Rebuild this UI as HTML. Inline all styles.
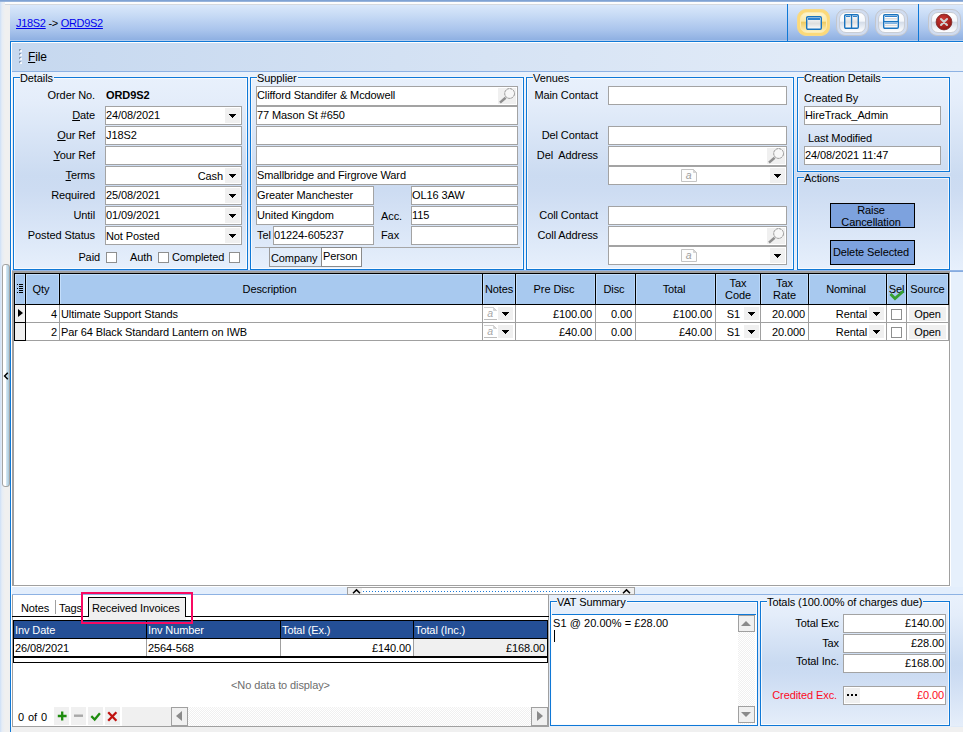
<!DOCTYPE html>
<html>
<head>
<meta charset="utf-8">
<title>ORD9S2</title>
<style>
*{box-sizing:border-box;margin:0;padding:0}
html,body{width:963px;height:732px;overflow:hidden;background:#f0f0f0}
body{font-family:"Liberation Sans","DejaVu Sans",sans-serif;font-size:11px;color:#000;position:relative;letter-spacing:-0.1px}
.a{position:absolute}
.t{position:absolute;white-space:nowrap;line-height:13px;height:13px}
.r{text-align:right}
.c{text-align:center}
u{text-decoration:underline}
/* top */
#topline{left:0;top:0;width:963px;height:5px;background:linear-gradient(#7fa2d3 0 1px,#98b4dc 1px 2px,#fdfdfd 2px 4px,#d4d8de 4px 5px)}
#leftstrip{left:0;top:2px;width:5px;height:730px;background:linear-gradient(90deg,#cddff6,#e6edf6 40%,#f0f0f0)}
#hdr{left:10px;top:5px;width:953px;height:36px;background:linear-gradient(#dae8fb 0%,#c6daf5 30%,#a9c4ec 70%,#8fb0e2 97%,#b4ccee 98%)}
#panel{left:10px;top:41px;width:953px;height:691px;background:#dfeaf8;border-left:1px solid #0f78d6;border-top:1px solid #0f78d6;box-shadow:inset 1px 1px 0 #fff}
#menubar{left:12px;top:43px;width:951px;height:28px;background:linear-gradient(90deg,#c6d8ef,#e6eef9)}
#content{left:12px;top:72px;width:951px;height:524px;background:#e6f0fc}
#toppanel{left:12px;top:72px;width:951px;height:199px;background:linear-gradient(#e9f1fc 0%,#e4edfa 15%,#cbdbf1 52%,#cddcf2 60%,#e7f0fc 100%)}
/* fieldsets */
.fs{position:absolute;border:1px solid #0f78d6;box-shadow:inset 0 0 0 1px rgba(255,255,255,.75),0 0 0 1px rgba(255,255,255,.25)}
.lg{position:absolute;top:-5px;left:6px;height:10px;line-height:10px;padding:0 1px 0 0;background:#e7f0fb;white-space:nowrap}
.in{position:absolute;height:19px;background:#fff;border:1px solid #a3a3a3;line-height:16px;padding-left:0;white-space:nowrap;overflow:hidden}
.dd{position:absolute;right:1px;top:1px;width:15px;height:15px;background:#f0f0f0}
.dd:after{content:"";position:absolute;left:4px;top:6px;width:7px;height:4px;background:linear-gradient(#000,#000) 0 0/7px 1px no-repeat,linear-gradient(#000,#000) 1px 1px/5px 1px no-repeat,linear-gradient(#000,#000) 2px 2px/3px 1px no-repeat,linear-gradient(#000,#000) 3px 3px/1px 1px no-repeat}
.cb{position:absolute;width:11px;height:11px;background:#fff;border:1px solid #8e8f8f}
.btn{position:absolute;background:#7da2de;border:1px solid #000;text-align:center;line-height:12px;padding-right:3px}

.mag{position:absolute;right:1px;top:1px;width:18px;height:16px;background:#f0f0f0}
.memo{position:absolute}

.gh{background:#a8c9ef;box-shadow:inset 1px 1px 0 #c4defb,inset -1px 0 0 #b9d6f8;text-align:center;white-space:nowrap}
.gdd{width:15px;height:13px;background:#f0f0f0}
.gdd:after{content:"";position:absolute;left:4px;top:5px;width:7px;height:4px;background:linear-gradient(#000,#000) 0 0/7px 1px no-repeat,linear-gradient(#000,#000) 1px 1px/5px 1px no-repeat,linear-gradient(#000,#000) 2px 2px/3px 1px no-repeat,linear-gradient(#000,#000) 3px 3px/1px 1px no-repeat}
.memo2{width:11px;height:12px;border:1px solid #c8c8c8;border-top-color:#ddd;background:#fff;font-family:"Liberation Serif",serif;font-style:italic;font-size:11px;line-height:9px;color:#b4b4b4;text-align:center;letter-spacing:0}
</style>
</head>
<body>
<div class="a" id="topline"></div>
<div class="a" id="leftstrip"></div>
<div class="a" id="hdr"></div>
<div class="a" id="panel"></div>
<div class="a" id="menubar"></div>
<div class="a" style="left:11px;top:727px;width:952px;height:5px;background:#f0f0f0"></div>
<div class="a" id="content"></div>
<div class="a" id="toppanel"></div>
<div class="a" style="left:12px;top:71px;width:951px;height:1px;background:#8db2e3"></div>

<!-- header text -->
<div class="t" style="left:16px;top:17px;color:#000;letter-spacing:-0.3px"><span style="color:#0000ee;text-decoration:underline">J18S2</span> -&gt; <span style="color:#0000ee;text-decoration:underline">ORD9S2</span></div>

<!-- menu -->
<div class="t" style="left:28px;top:51px;font-size:12px"><u>F</u>ile</div>

<!-- Details -->
<div class="fs" style="left:13px;top:77px;width:235px;height:193px"><span class="lg">Details</span></div>
<div class="t r" style="left:20px;width:75px;top:89px">Order No.</div>
<div class="t" style="left:106px;top:89px;font-weight:bold">ORD9S2</div>
<div class="t r" style="left:20px;width:75px;top:109px"><u>D</u>ate</div>
<div class="in" style="left:105px;top:106px;width:137px">24/08/2021<span class="dd"></span></div>
<div class="t r" style="left:20px;width:75px;top:129px"><u>O</u>ur Ref</div>
<div class="in" style="left:105px;top:126px;width:137px">J18S2</div>
<div class="t r" style="left:20px;width:75px;top:149px"><u>Y</u>our Ref</div>
<div class="in" style="left:105px;top:146px;width:137px"></div>
<div class="t r" style="left:20px;width:75px;top:169px"><u>T</u>erms</div>
<div class="in r" style="left:105px;top:166px;width:137px;padding-right:18px;line-height:18px">Cash<span class="dd"></span></div>
<div class="t r" style="left:20px;width:75px;top:189px">Required</div>
<div class="in" style="left:105px;top:186px;width:137px">25/08/2021<span class="dd"></span></div>
<div class="t r" style="left:20px;width:75px;top:209px">Until</div>
<div class="in" style="left:105px;top:206px;width:137px">01/09/2021<span class="dd"></span></div>
<div class="t r" style="left:20px;width:75px;top:229px">Posted Status</div>
<div class="in" style="left:105px;top:226px;width:137px;height:19px;line-height:18px">Not Posted<span class="dd"></span></div>
<div class="t r" style="left:20px;width:80px;top:251px">Paid</div>
<div class="cb" style="left:106px;top:252px"></div>
<div class="t" style="left:130px;top:251px">Auth</div>
<div class="cb" style="left:158px;top:252px"></div>
<div class="t" style="left:172px;top:251px">Completed</div>
<div class="cb" style="left:229px;top:252px"></div>

<!-- Supplier -->
<div class="fs" style="left:250px;top:77px;width:274px;height:193px"><span class="lg">Supplier</span></div>
<div class="in" style="left:256px;top:86px;width:262px;height:20px">Clifford Standifer &amp; Mcdowell<svg class="mag" viewBox="0 0 18 16"><circle cx="11.6" cy="5.5" r="4.9" fill="#f7f7f7" stroke="#8f8f8f" stroke-width="1" stroke-dasharray="2.6 0.6"/><path d="M2 14.6L7.6 9.7" stroke="#8e8e8e" stroke-width="2.5"/></svg></div>
<div class="in" style="left:256px;top:106px;width:262px">77 Mason St #650</div>
<div class="in" style="left:256px;top:126px;width:262px"></div>
<div class="in" style="left:256px;top:146px;width:262px"></div>
<div class="in" style="left:256px;top:166px;width:262px">Smallbridge and Firgrove Ward</div>
<div class="in" style="left:256px;top:186px;width:118px">Greater Manchester</div>
<div class="in" style="left:411px;top:186px;width:107px">OL16 3AW</div>
<div class="in" style="left:256px;top:206px;width:118px">United Kingdom</div>
<div class="t" style="left:381px;top:210px">Acc.</div>
<div class="in" style="left:411px;top:206px;width:107px">115</div>
<div class="t" style="left:257px;top:229px">Tel</div>
<div class="in" style="left:273px;top:226px;width:101px">01224-605237</div>
<div class="t" style="left:381px;top:229px">Fax</div>
<div class="in" style="left:411px;top:226px;width:107px"></div>
<div class="a" style="left:255px;top:247px;width:265px;height:1px;background:#a6a6a6"></div>
<div class="a" style="left:269px;top:247px;width:53px;height:20px;border:1px solid #9a9a9a;border-right:0;background:#e2ecf9"></div>
<div class="t" style="left:271px;top:252px">Company</div>
<div class="a" style="left:321px;top:247px;width:41px;height:20px;border:1px solid #8a8a8a;background:#fff"></div>
<div class="t" style="left:323px;top:250px">Person</div>

<!-- Venues -->
<div class="fs" style="left:526px;top:77px;width:268px;height:193px"><span class="lg">Venues</span></div>
<div class="t r" style="left:528px;width:70px;top:89px">Main Contact</div>
<div class="in" style="left:608px;top:86px;width:179px"></div>
<div class="t r" style="left:528px;width:70px;top:129px">Del Contact</div>
<div class="in" style="left:608px;top:126px;width:179px"></div>
<div class="t r" style="left:528px;width:70px;top:149px">Del&nbsp; Address</div>
<div class="in" style="left:608px;top:146px;width:179px;height:20px"><svg class="mag" viewBox="0 0 18 16"><circle cx="11.6" cy="5.5" r="4.9" fill="#f7f7f7" stroke="#8f8f8f" stroke-width="1" stroke-dasharray="2.6 0.6"/><path d="M2 14.6L7.6 9.7" stroke="#8e8e8e" stroke-width="2.5"/></svg></div>
<div class="in" style="left:608px;top:166px;width:179px"><svg class="memo" style="left:72px;top:2px" width="16" height="13" viewBox="0 0 16 13"><path d="M.5 .5H12.5L15.5 3.5V12.5H.5Z" fill="#fdfdfd" stroke="#c4c4c4"/><path d="M12.5 .5V3.5H15.5Z" fill="#d6d6d6" stroke="#c4c4c4" stroke-width=".6"/><text x="7.7" y="10" text-anchor="middle" font-family="Liberation Sans, sans-serif" font-style="italic" font-size="10.5" fill="#9c9c9c">a</text></svg><span class="dd"></span></div>
<div class="t r" style="left:528px;width:70px;top:209px">Coll Contact</div>
<div class="in" style="left:608px;top:206px;width:179px"></div>
<div class="t r" style="left:528px;width:70px;top:229px">Coll Address</div>
<div class="in" style="left:608px;top:226px;width:179px;height:20px"><svg class="mag" viewBox="0 0 18 16"><circle cx="11.6" cy="5.5" r="4.9" fill="#f7f7f7" stroke="#8f8f8f" stroke-width="1" stroke-dasharray="2.6 0.6"/><path d="M2 14.6L7.6 9.7" stroke="#8e8e8e" stroke-width="2.5"/></svg></div>
<div class="in" style="left:608px;top:246px;width:179px"><svg class="memo" style="left:72px;top:2px" width="16" height="13" viewBox="0 0 16 13"><path d="M.5 .5H12.5L15.5 3.5V12.5H.5Z" fill="#fdfdfd" stroke="#c4c4c4"/><path d="M12.5 .5V3.5H15.5Z" fill="#d6d6d6" stroke="#c4c4c4" stroke-width=".6"/><text x="7.7" y="10" text-anchor="middle" font-family="Liberation Sans, sans-serif" font-style="italic" font-size="10.5" fill="#9c9c9c">a</text></svg><span class="dd"></span></div>

<!-- Creation Details -->
<div class="fs" style="left:797px;top:77px;width:153px;height:95px"><span class="lg">Creation Details</span></div>
<div class="t" style="left:804px;top:92px">Created By</div>
<div class="in" style="left:804px;top:106px;width:137px">HireTrack_Admin</div>
<div class="t" style="left:808px;top:132px">Last Modified</div>
<div class="in" style="left:804px;top:146px;width:137px">24/08/2021 11:47</div>

<!-- Actions -->
<div class="fs" style="left:797px;top:177px;width:153px;height:93px"><span class="lg" style="background:#cbdbf1">Actions</span></div>
<div class="btn" style="left:830px;top:203px;width:85px;height:25px;padding-top:0px">Raise<br>Cancellation</div>
<div class="btn" style="left:830px;top:240px;width:85px;height:25px;line-height:22px">Delete Selected</div>

<div class="a" style="left:12px;top:270px;width:951px;height:1px;background:#94b6e5"></div><div class="a" style="left:950px;top:271px;width:13px;height:1px;background:#86abdf"></div><div class="a" style="left:950px;top:272px;width:1px;height:314px;background:#fff"></div>
<!-- Grid -->
<div class="a" style="left:12px;top:271px;width:938px;height:315px;border:1px solid #a0a0a0;background:#fff"></div>
<div class="a" style="left:13px;top:272px;width:936px;height:1px;background:#a0a0a0"></div><div class="a" style="left:13px;top:272px;width:1px;height:313px;background:#a0a0a0"></div>
<div class="a" style="left:14px;top:273px;width:935px;height:32px;background:#000"></div>
<div class="a gh" style="left:15px;top:274px;width:10px;height:30px;line-height:30px"></div>
<div class="a gh" style="left:26px;top:274px;width:33px;height:30px;line-height:30px;padding-right:3px">Qty</div>
<div class="a gh" style="left:60px;top:274px;width:422px;height:30px;line-height:30px;padding-right:3px">Description</div>
<div class="a gh" style="left:483px;top:274px;width:32px;height:30px;line-height:30px">Notes</div>
<div class="a gh" style="left:516px;top:274px;width:79px;height:30px;line-height:30px;padding-right:3px">Pre Disc</div>
<div class="a gh" style="left:596px;top:274px;width:39px;height:30px;line-height:30px;padding-right:3px">Disc</div>
<div class="a gh" style="left:636px;top:274px;width:79px;height:30px;line-height:30px;padding-right:3px">Total</div>
<div class="a gh" style="left:716px;top:274px;width:44px;height:30px;line-height:12px;padding-top:3px">Tax<br>Code</div>
<div class="a gh" style="left:761px;top:274px;width:47px;height:30px;line-height:12px;padding-top:3px">Tax<br>Rate</div>
<div class="a gh" style="left:809px;top:274px;width:77px;height:30px;line-height:30px;padding-right:3px">Nominal</div>
<div class="a gh" style="left:887px;top:274px;width:19px;height:30px;line-height:30px">Sel</div>
<div class="a gh" style="left:907px;top:274px;width:41px;height:30px;line-height:30px">Source</div>
<div class="a" style="left:14px;top:304px;width:12px;height:19px;background:#000"></div><div class="a" style="left:15px;top:305px;width:10px;height:17px;background:#f0f0f0"></div>
<div class="a" style="left:18px;top:309px;border:4.5px solid transparent;border-left:5.5px solid #000;border-right:0"></div>
<div class="a" style="left:26px;top:322px;width:923px;height:1px;background:#a0a0a0"></div>
<div class="a" style="left:59px;top:305px;width:1px;height:17px;background:#a0a0a0"></div>
<div class="a" style="left:482px;top:305px;width:1px;height:17px;background:#a0a0a0"></div>
<div class="a" style="left:515px;top:305px;width:1px;height:17px;background:#a0a0a0"></div>
<div class="a" style="left:595px;top:305px;width:1px;height:17px;background:#a0a0a0"></div>
<div class="a" style="left:635px;top:305px;width:1px;height:17px;background:#a0a0a0"></div>
<div class="a" style="left:715px;top:305px;width:1px;height:17px;background:#a0a0a0"></div>
<div class="a" style="left:760px;top:305px;width:1px;height:17px;background:#a0a0a0"></div>
<div class="a" style="left:808px;top:305px;width:1px;height:17px;background:#a0a0a0"></div>
<div class="a" style="left:886px;top:305px;width:1px;height:17px;background:#a0a0a0"></div>
<div class="a" style="left:906px;top:305px;width:1px;height:17px;background:#a0a0a0"></div>
<div class="a" style="left:948px;top:305px;width:1px;height:17px;background:#a0a0a0"></div>
<div class="t r" style="left:26px;width:33px;top:308px;padding-right:2px">4</div>
<div class="t " style="left:60px;width:422px;top:308px;padding-left:1px">Ultimate Support Stands</div>
<svg class="a" style="left:484px;top:307px" width="13" height="13" viewBox="0 0 13 13"><path d="M0 .5H9.5L12.5 3.5" fill="none" stroke="#cfcfcf"/><path d="M9.5 .5V3.5H12.5Z" fill="#d6d6d6" stroke="#c9c9c9" stroke-width=".6"/><path d="M0 12.5H13" stroke="#bdbdbd"/><text x="6" y="10" text-anchor="middle" font-family="Liberation Sans, sans-serif" font-style="italic" font-size="10.5" fill="#a6a6a6">a</text></svg><div class="a gdd" style="left:498px;top:307px"></div>
<div class="t r" style="left:516px;width:79px;top:308px;padding-right:3px">£100.00</div>
<div class="t r" style="left:596px;width:39px;top:308px;padding-right:3px">0.00</div>
<div class="t r" style="left:636px;width:79px;top:308px;padding-right:3px">£100.00</div>
<div class="t r" style="left:716px;width:44px;top:308px;padding-right:20px">S1</div>
<div class="a gdd" style="left:744px;top:307px"></div>
<div class="t r" style="left:761px;width:47px;top:308px;padding-right:3px">20.000</div>
<div class="t r" style="left:809px;width:77px;top:308px;padding-right:19px">Rental</div>
<div class="a gdd" style="left:869px;top:307px"></div>
<div class="cb" style="left:891px;top:309px"></div>
<div class="a" style="left:909px;top:307px;width:37px;height:14px;background:#f0f0f0"></div>
<div class="t c" style="left:907px;width:41px;top:308px;">Open</div>
<div class="a" style="left:14px;top:322px;width:12px;height:19px;background:#000"></div><div class="a" style="left:15px;top:323px;width:10px;height:17px;background:#f0f0f0"></div>
<div class="a" style="left:26px;top:340px;width:923px;height:1px;background:#a0a0a0"></div>
<div class="a" style="left:59px;top:323px;width:1px;height:17px;background:#a0a0a0"></div>
<div class="a" style="left:482px;top:323px;width:1px;height:17px;background:#a0a0a0"></div>
<div class="a" style="left:515px;top:323px;width:1px;height:17px;background:#a0a0a0"></div>
<div class="a" style="left:595px;top:323px;width:1px;height:17px;background:#a0a0a0"></div>
<div class="a" style="left:635px;top:323px;width:1px;height:17px;background:#a0a0a0"></div>
<div class="a" style="left:715px;top:323px;width:1px;height:17px;background:#a0a0a0"></div>
<div class="a" style="left:760px;top:323px;width:1px;height:17px;background:#a0a0a0"></div>
<div class="a" style="left:808px;top:323px;width:1px;height:17px;background:#a0a0a0"></div>
<div class="a" style="left:886px;top:323px;width:1px;height:17px;background:#a0a0a0"></div>
<div class="a" style="left:906px;top:323px;width:1px;height:17px;background:#a0a0a0"></div>
<div class="a" style="left:948px;top:323px;width:1px;height:17px;background:#a0a0a0"></div>
<div class="t r" style="left:26px;width:33px;top:326px;padding-right:2px">2</div>
<div class="t " style="left:60px;width:422px;top:326px;padding-left:1px">Par 64 Black Standard Lantern on IWB</div>
<svg class="a" style="left:484px;top:325px" width="13" height="13" viewBox="0 0 13 13"><path d="M0 .5H9.5L12.5 3.5" fill="none" stroke="#cfcfcf"/><path d="M9.5 .5V3.5H12.5Z" fill="#d6d6d6" stroke="#c9c9c9" stroke-width=".6"/><path d="M0 12.5H13" stroke="#bdbdbd"/><text x="6" y="10" text-anchor="middle" font-family="Liberation Sans, sans-serif" font-style="italic" font-size="10.5" fill="#a6a6a6">a</text></svg><div class="a gdd" style="left:498px;top:325px"></div>
<div class="t r" style="left:516px;width:79px;top:326px;padding-right:3px">£40.00</div>
<div class="t r" style="left:596px;width:39px;top:326px;padding-right:3px">0.00</div>
<div class="t r" style="left:636px;width:79px;top:326px;padding-right:3px">£40.00</div>
<div class="t r" style="left:716px;width:44px;top:326px;padding-right:20px">S1</div>
<div class="a gdd" style="left:744px;top:325px"></div>
<div class="t r" style="left:761px;width:47px;top:326px;padding-right:3px">20.000</div>
<div class="t r" style="left:809px;width:77px;top:326px;padding-right:19px">Rental</div>
<div class="a gdd" style="left:869px;top:325px"></div>
<div class="cb" style="left:891px;top:327px"></div>
<div class="a" style="left:909px;top:325px;width:37px;height:14px;background:#f0f0f0"></div>
<div class="t c" style="left:907px;width:41px;top:326px;">Open</div>
<svg class="a" style="left:889px;top:289px" width="16" height="12" viewBox="0 0 16 12"><path d="M1.5 5 L6 9.5 L14.5 2" fill="none" stroke="#35a030" stroke-width="2.8"/></svg>
<div class="a" style="left:19px;top:284px;width:4px;height:9px;background:repeating-linear-gradient(#000 0 1px,transparent 1px 2px)"></div><div class="a" style="left:17px;top:284px;width:1px;height:9px;background:repeating-linear-gradient(#000 0 1px,transparent 1px 4px)"></div>
<div class="a" style="left:12px;top:586px;width:938px;height:1px;background:#fff"></div>
<div class="a" style="left:12px;top:587px;width:951px;height:8px;background:#e3eefc;border-bottom:1px solid #8db2e3"></div>
<div class="a" style="left:347px;top:587px;width:288px;height:8px;background:#fff;border:1px solid #a0a0a0"></div>
<div class="a" style="left:348px;top:588px;width:14px;height:6px;background:#f0f0f0"></div><div class="a" style="left:620px;top:588px;width:14px;height:6px;background:#f0f0f0"></div>
<div class="a" style="left:363px;top:591px;width:256px;height:1px;background:repeating-linear-gradient(90deg,#1a7ad8 0 1px,transparent 1px 3px)"></div>
<svg class="a" style="left:352px;top:588px" width="9" height="6" viewBox="0 0 9 6"><path d="M1 5.2 L4.5 1.9 L8 5.2" fill="none" stroke="#000" stroke-width="1.5"/></svg>
<svg class="a" style="left:622px;top:588px" width="9" height="6" viewBox="0 0 9 6"><path d="M1 5.2 L4.5 1.9 L8 5.2" fill="none" stroke="#000" stroke-width="1.5"/></svg>
<!-- Bottom left -->
<div class="a" style="left:12px;top:595px;width:537px;height:132px;background:#fff;border:1px solid #a0a0a0;border-top:0"></div>
<div class="a" style="left:12px;top:616px;width:537px;height:1px;background:#000"></div>
<div class="a" style="left:88px;top:597px;width:98px;height:23px;background:#f0f0f0;border:1px solid #000;border-bottom:0"></div><div class="a" style="left:88px;top:617px;width:98px;height:3px;background:#f0f0f0"></div>
<div class="t" style="left:21px;top:602px">Notes</div><div class="a" style="left:55px;top:600px;width:1px;height:14px;background:#a0a0a0"></div><div class="t" style="left:59px;top:602px">Tags</div><div class="t" style="left:92px;top:602px">Received Invoices</div>
<div class="a" style="left:81px;top:592px;width:112px;height:32px;border:2px solid #f80a62;z-index:5"></div>
<div class="a" style="left:13px;top:620px;width:535px;height:19px;background:#000"></div>
<div class="a" style="left:14px;top:621px;width:132px;height:17px;background:#244f96;color:#fff;line-height:18px;padding-left:1px;white-space:nowrap">Inv Date</div>
<div class="a" style="left:147px;top:621px;width:133px;height:17px;background:#244f96;color:#fff;line-height:18px;padding-left:1px;white-space:nowrap">Inv Number</div>
<div class="a" style="left:281px;top:621px;width:132px;height:17px;background:#244f96;color:#fff;line-height:18px;padding-left:1px;white-space:nowrap">Total (Ex.)</div>
<div class="a" style="left:414px;top:621px;width:133px;height:17px;background:#244f96;color:#fff;line-height:18px;padding-left:1px;white-space:nowrap">Total (Inc.)</div>
<div class="a" style="left:13px;top:639px;width:535px;height:24px;background:#000"></div>
<div class="a " style="left:14px;top:639px;width:132px;height:17px;background:#fff;line-height:18px;padding:0 2px 0 1px;white-space:nowrap">26/08/2021</div>
<div class="a " style="left:147px;top:639px;width:133px;height:17px;background:#fff;line-height:18px;padding:0 2px 0 1px;white-space:nowrap">2564-568</div>
<div class="a r" style="left:281px;top:639px;width:132px;height:17px;background:#fff;line-height:18px;padding:0 2px 0 1px;white-space:nowrap">£140.00</div>
<div class="a r" style="left:414px;top:639px;width:133px;height:17px;background:#f0f0f0;line-height:18px;padding:0 2px 0 1px;white-space:nowrap">£168.00</div>
<div class="a" style="left:146px;top:639px;width:1px;height:17px;background:#a0a0a0"></div>
<div class="a" style="left:280px;top:639px;width:1px;height:17px;background:#a0a0a0"></div>
<div class="a" style="left:413px;top:639px;width:1px;height:17px;background:#a0a0a0"></div>
<div class="a" style="left:14px;top:658px;width:533px;height:4px;background:#fff"></div>
<div class="t c" style="left:13px;width:535px;top:679px;color:#6d6d6d">&lt;No data to display&gt;</div>
<div class="a" style="left:54px;top:707px;width:494px;height:19px;background:#f0f0f0"></div>
<div class="t" style="left:18px;top:711px;word-spacing:1px">0 of 0</div>
<div class="a" style="left:69px;top:707px;width:2px;height:19px;background:#fff"></div>
<div class="a" style="left:86px;top:707px;width:2px;height:19px;background:#fff"></div>
<div class="a" style="left:103px;top:707px;width:2px;height:19px;background:#fff"></div>
<div class="a" style="left:188px;top:707px;width:343px;height:19px;background:repeating-conic-gradient(#fff 0 25%,#f0f0f0 0 50%) 0 0/2px 2px"></div>
<div class="a" style="left:171px;top:707px;width:17px;height:19px;background:#f0f0f0;border:1px solid #a0a0a0"></div><div class="a" style="left:176px;top:711px;border:5.5px solid transparent;border-right:6.5px solid #8a8a8a;border-left:0"></div>
<div class="a" style="left:531px;top:707px;width:17px;height:19px;background:#f0f0f0;border:1px solid #a0a0a0"></div><div class="a" style="left:537px;top:711px;border:5.5px solid transparent;border-left:6.5px solid #8a8a8a;border-right:0"></div>
<div class="a" style="left:120px;top:707px;width:2px;height:19px;background:#fff"></div><div class="a" style="left:54px;top:725px;width:68px;height:1px;background:#fff"></div><svg class="a" style="left:54px;top:707px" width="70" height="19" viewBox="0 0 70 19"><path d="M3.8 9h8.8M8.2 4.6v8.8" stroke="#1e8c0e" stroke-width="2.3" fill="none"/><path d="M20 8.7h9" stroke="#a8a8a8" stroke-width="2.4" fill="none"/><path d="M37.3 9.2l3.4 3.3l5.2-6.2" stroke="#1e8c0e" stroke-width="2.3" fill="none"/><path d="M54.2 5.2l8.2 8.6M62.4 5.2l-8.2 8.6" stroke="#c0120f" stroke-width="2.3" fill="none"/></svg>

<!-- VAT -->
<div class="a" style="left:549px;top:595px;width:414px;height:131px;background:linear-gradient(#e9f1fc 0%,#e4edfa 15%,#c9daf1 52%,#cbdbf2 60%,#e5eefa 100%)"></div>
<div class="fs" style="left:550px;top:601px;width:208px;height:125px;background:#e5eefa"><span class="lg">VAT Summary</span></div>
<div class="a" style="left:552px;top:614px;width:204px;height:110px;background:#fff;border-top:1px solid #0f78d6"></div>
<div class="t" style="left:553px;top:617px;letter-spacing:0.05px">S1 @ 20.00% = £28.00</div><div class="a" style="left:554px;top:630px;width:1px;height:12px;background:#000"></div>
<div class="a" style="left:738px;top:615px;width:17px;height:109px;background:repeating-conic-gradient(#fff 0 25%,#f0f0f0 0 50%) 0 0/2px 2px"></div>
<div class="a" style="left:738px;top:615px;width:17px;height:17px;background:#f0f0f0;border:1px solid #a0a0a0"></div><div class="a" style="left:741px;top:621px;border:5.5px solid transparent;border-bottom:5.5px solid #8a8a8a;border-top:0"></div>
<div class="a" style="left:738px;top:706px;width:17px;height:17px;background:#f0f0f0;border:1px solid #a0a0a0"></div><div class="a" style="left:741px;top:712px;border:5.5px solid transparent;border-top:5.5px solid #8a8a8a;border-bottom:0"></div>

<!-- Totals -->
<div class="fs" style="left:760px;top:601px;width:190px;height:125px"><span class="lg">Totals (100.00% of charges due)</span></div>
<div class="t r" style="left:765px;width:74px;top:617px;color:#000">Total Exc</div>
<div class="in r" style="left:843px;top:614px;width:103px;padding-right:1px;color:#000">£140.00</div>
<div class="t r" style="left:765px;width:74px;top:637px;color:#000">Tax</div>
<div class="in r" style="left:843px;top:634px;width:103px;padding-right:1px;color:#000">£28.00</div>
<div class="t r" style="left:765px;width:74px;top:655px;color:#000">Total Inc.</div>
<div class="in r" style="left:843px;top:654px;width:103px;padding-right:1px;color:#000">£168.00</div>
<div class="t r" style="left:765px;width:72px;top:689px;color:#fc0a1e">Credited Exc.</div>
<div class="in r" style="left:843px;top:686px;width:103px;padding-right:1px;color:#fc0a1e">£0.00</div>
<div class="a" style="left:845px;top:688px;width:15px;height:15px;background:#f0f0f0"></div><div class="a" style="left:847px;top:694px;width:10px;height:2px;background:repeating-linear-gradient(90deg,#000 0 2px,transparent 2px 4px)"></div>
<!-- header buttons -->
<div class="a" style="left:787px;top:4px;width:1px;height:37px;background:#0f78d6"></div><div class="a" style="left:918px;top:4px;width:1px;height:37px;background:#0f78d6"></div>
<div class="a" style="left:797px;top:9px;width:33px;height:27px;border-radius:9px;background:#fcd978;border:1px solid #f6d98a"></div>
<div class="a" style="left:800px;top:12px;width:27px;height:21px;border-radius:7px;border:1px solid #fbeab0;background:linear-gradient(#fdf4d0 0%,#fbeaa8 42%,#eecb66 50%,#f3d57c 62%,#fdf1c2 100%)"></div>
<svg class="a" style="left:806px;top:16px" width="16" height="14" viewBox="0 0 16 14"><defs><linearGradient id="ig" x1="0" y1="0" x2="0" y2="1"><stop offset="0" stop-color="#fff"/><stop offset=".55" stop-color="#dedede"/><stop offset="1" stop-color="#fff"/></linearGradient></defs><rect x=".7" y=".7" width="14.6" height="12.6" rx="1.2" fill="url(#ig)" stroke="#1973be" stroke-width="1.4"/><rect x="2" y="2" width="12" height="2" fill="#2e82d0"/></svg>
<div class="a" style="left:836px;top:9px;width:33px;height:27px;border-radius:9px;background:#d0dcf0;border:1px solid #c3c6cc"></div>
<div class="a" style="left:839px;top:12px;width:27px;height:21px;border-radius:7px;border:1px solid #c9cdd4;background:linear-gradient(#ffffff 0%,#f4f7fb 42%,#d5dde9 50%,#dfe6f0 62%,#ffffff 100%)"></div>
<div class="a" style="left:875px;top:9px;width:33px;height:27px;border-radius:9px;background:#d0dcf0;border:1px solid #c3c6cc"></div>
<div class="a" style="left:878px;top:12px;width:27px;height:21px;border-radius:7px;border:1px solid #c9cdd4;background:linear-gradient(#ffffff 0%,#f4f7fb 42%,#d5dde9 50%,#dfe6f0 62%,#ffffff 100%)"></div>
<div class="a" style="left:928px;top:9px;width:33px;height:27px;border-radius:9px;background:#d0dcf0;border:1px solid #c3c6cc"></div>
<div class="a" style="left:931px;top:12px;width:27px;height:21px;border-radius:7px;border:1px solid #c9cdd4;background:linear-gradient(#ffffff 0%,#f4f7fb 42%,#d5dde9 50%,#dfe6f0 62%,#ffffff 100%)"></div>
<svg class="a" style="left:844px;top:14px" width="15" height="15" viewBox="0 0 15 15"><rect x=".7" y=".7" width="13.6" height="13.6" rx="1.2" fill="url(#ig)" stroke="#1973be" stroke-width="1.4"/><rect x="6.9" y="1" width="1.3" height="13" fill="#1973be"/><rect x="2" y="2" width="4.3" height="1" fill="#2e82d0"/><rect x="8.8" y="2" width="4.3" height="1" fill="#2e82d0"/></svg>
<svg class="a" style="left:883px;top:14px" width="16" height="15" viewBox="0 0 16 15"><rect x=".7" y=".7" width="14.6" height="13.6" rx="1.2" fill="#fff" stroke="#1973be" stroke-width="1.4"/><rect x="1" y="6.9" width="14" height="1.3" fill="#1973be"/><rect x="2" y="2" width="12" height="1" fill="#2e82d0"/><rect x="2" y="8.6" width="12" height="1" fill="#2e82d0"/><rect x="2" y="4" width="12" height="1.5" fill="#dcdcdc"/><rect x="2" y="10.7" width="12" height="1.5" fill="#dcdcdc"/></svg>
<svg class="a" style="left:935px;top:13px" width="18" height="18" viewBox="0 0 18 18"><defs><radialGradient id="rg" cx="0.42" cy="0.35" r="0.7"><stop offset="0" stop-color="#cf3b36"/><stop offset="1" stop-color="#8d1411"/></radialGradient></defs><circle cx="9" cy="9" r="7.9" fill="url(#rg)" stroke="#7a2623" stroke-width="0.8"/><path d="M6 6l6 6M12 6l-6 6" stroke="#d2d2d2" stroke-width="2.1" stroke-linecap="round"/></svg>
<!-- menu grip -->
<div class="a" style="left:19px;top:49px;width:2px;height:15px;background:repeating-linear-gradient(#8c9db5 0 2px,transparent 2px 4px)"></div><div class="a" style="left:20px;top:50px;width:2px;height:15px;background:repeating-linear-gradient(#fff 0 2px,transparent 2px 4px);opacity:.8"></div>
<div class="a" style="left:2px;top:264px;width:8px;height:223px;border:1px solid #a3a3a3;border-radius:3px;background:linear-gradient(90deg,#fff 0 42%,#d9ebf6 50%,#a6c6da 100%)"></div>
<svg class="a" style="left:3px;top:372px" width="6" height="8" viewBox="0 0 6 8"><path d="M4.8 .8L1.6 4L4.8 7.2" fill="none" stroke="#000" stroke-width="1.5"/></svg>
</body>
</html>
